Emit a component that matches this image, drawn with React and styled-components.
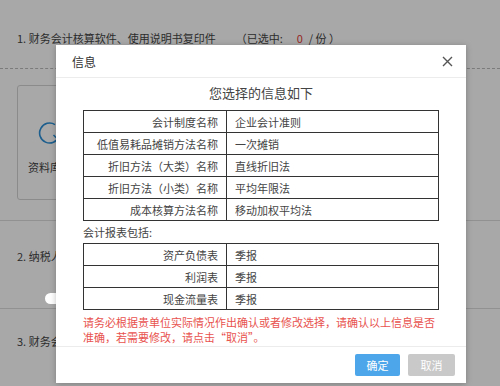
import React from 'react';
import styled, { createGlobalStyle } from 'styled-components';

const Global = createGlobalStyle`
  html, body { margin: 0; padding: 0; }
  body {
    width: 500px;
    height: 386px;
    overflow: hidden;
    background: #fff;
    font-family: "Noto Sans CJK SC", "Noto Sans", sans-serif;
  }
`;

const Page = styled.div`
  position: relative;
  width: 500px;
  height: 386px;
  overflow: hidden;
  background: #fff;
  color: #444;
  font-size: 11px;
`;

const Section = styled.div`
  padding: ${p => p.$pad || '0 17px'};
  border-bottom: ${p => (p.$dashed ? '1px dashed #bbb' : p.$line ? '1px solid #ddd' : 'none')};
  height: ${p => p.$h}px;
  box-sizing: border-box;
  display: flex;
  flex-direction: column;
`;

const StepTitle = styled.div`
  line-height: 16px;
  white-space: nowrap;
  display: flex;
  gap: 4px;
`;

const Count = styled.span`
  margin-left: 16px;
  b { color: #e43a36; font-weight: normal; margin: 0 6px 0 14px; }
`;

const Card = styled.div`
  width: 120px;
  height: 115px;
  border: 1px solid #d4d4d4;
  border-radius: 3px;
  margin-top: 16px;
  display: flex;
  flex-direction: column;
  align-items: flex-start;
  gap: 14px;
  padding: 35px 0 0 10px;
  box-sizing: border-box;
  svg { margin-left: 10px; }
`;

const Overlay = styled.div`
  position: absolute;
  inset: 0;
  background: rgba(0, 0, 0, 0.34);
`;

const Blob = styled.div`
  position: absolute;
  left: 45px;
  top: 293px;
  width: 16px;
  height: 11px;
  border-radius: 6px;
  background: #fff;
`;

const Modal = styled.div`
  position: absolute;
  left: 56px;
  top: 45px;
  width: 410px;
  height: 338px;
  background: #fff;
  box-shadow: 0 1px 6px rgba(0, 0, 0, 0.25);
  display: flex;
  flex-direction: column;
  color: #333;
`;

const Header = styled.div`
  height: 32px;
  flex: none;
  display: flex;
  align-items: center;
  justify-content: space-between;
  padding: 0 13px 0 16px;
  border-bottom: 1px solid #ececec;
  font-size: 12px;
  color: #333;
`;

const Close = styled.span`
  display: flex;
  color: #555;
`;

const Body = styled.div`
  padding: 5px 27px 0;
  flex: 1;
`;

const Heading = styled.div`
  text-align: center;
  font-size: 13px;
  line-height: 20px;
  color: #444;
  margin-bottom: 7px;
`;

const Table = styled.table`
  width: 356px;
  border-collapse: collapse;
  font-size: 11px;
  color: #444;
  td {
    border: 1px solid #333;
    height: 21px;
    padding: 0 8px;
    line-height: 14px;
  }
  td:first-child {
    width: 126px;
    text-align: right;
  }
`;

const Label = styled.div`
  font-size: 11px;
  line-height: 22px;
  color: #444;
`;

const Warn = styled.div`
  margin-top: 5px;
  font-size: 11px;
  line-height: 15px;
  color: #e8524e;
  width: 356px;
`;

const Footer = styled.div`
  flex: none;
  height: 37px;
  border-top: 1px solid #ececec;
  display: flex;
  justify-content: flex-end;
  align-items: flex-start;
  gap: 8px;
  padding: 7px 11px 0 0;
  box-sizing: border-box;
`;

const Btn = styled.button`
  width: ${p => p.$w}px;
  height: 22px;
  border: none;
  border-radius: 2px;
  background: ${p => (p.$primary ? '#4da6ea' : '#c9c9c9')};
  color: #fff;
  font-family: inherit;
  font-size: 11px;
  padding: 0;
`;

const settings = [
  ['会计制度名称', '企业会计准则'],
  ['低值易耗品摊销方法名称', '一次摊销'],
  ['折旧方法（大类）名称', '直线折旧法'],
  ['折旧方法（小类）名称', '平均年限法'],
  ['成本核算方法名称', '移动加权平均法'],
];

const reports = [
  ['资产负债表', '季报'],
  ['利润表', '季报'],
  ['现金流量表', '季报'],
];

function InfoTable({ rows }) {
  return (
    <Table>
      <tbody>
        {rows.map(([k, v]) => (
          <tr key={k}>
            <td>{k}</td>
            <td>{v}</td>
          </tr>
        ))}
      </tbody>
    </Table>
  );
}

export default function App() {
  return (
    <>
      <Global />
      <Page>
        <Section $pad="30px 17px 0" $h={69} $dashed>
          <StepTitle>
            1. 财务会计核算软件、使用说明书复印件
            <Count>（已选中:<b>0</b>/ 份 ）</Count>
          </StepTitle>
        </Section>
        <Section $h={152} $line>
          <Card>
            <svg width="24" height="24" viewBox="0 0 24 24">
              <path d="M21 15.5A10 10 0 1 1 17 3.6" fill="none" stroke="#2b8fd6" strokeWidth="1.6" />
              <path d="M20 18.5L15.5 14" fill="none" stroke="#2b8fd6" strokeWidth="1.6" />
            </svg>
            <span>资料库上传</span>
          </Card>
        </Section>
        <Section $pad="27px 17px 0" $h={88} $line>
          <StepTitle>2. 纳税人</StepTitle>
        </Section>
        <Section $pad="24px 17px 0" $h={60}>
          <StepTitle>3. 财务会</StepTitle>
        </Section>
        <Overlay />
        <Blob />
        <Modal>
          <Header>
            <span>信息</span>
            <Close>
              <svg width="11" height="11" viewBox="0 0 11 11">
                <path d="M1 1L10 10M10 1L1 10" stroke="#555" strokeWidth="1.4" />
              </svg>
            </Close>
          </Header>
          <Body>
            <Heading>您选择的信息如下</Heading>
            <InfoTable rows={settings} />
            <Label>会计报表包括:</Label>
            <InfoTable rows={reports} />
            <Warn>
              请务必根据贵单位实际情况作出确认或者修改选择，请确认以上信息是否准确，若需要修改，请点击“取消”。
            </Warn>
          </Body>
          <Footer>
            <Btn $primary $w={45}>确定</Btn>
            <Btn $w={47}>取消</Btn>
          </Footer>
        </Modal>
      </Page>
    </>
  );
}
